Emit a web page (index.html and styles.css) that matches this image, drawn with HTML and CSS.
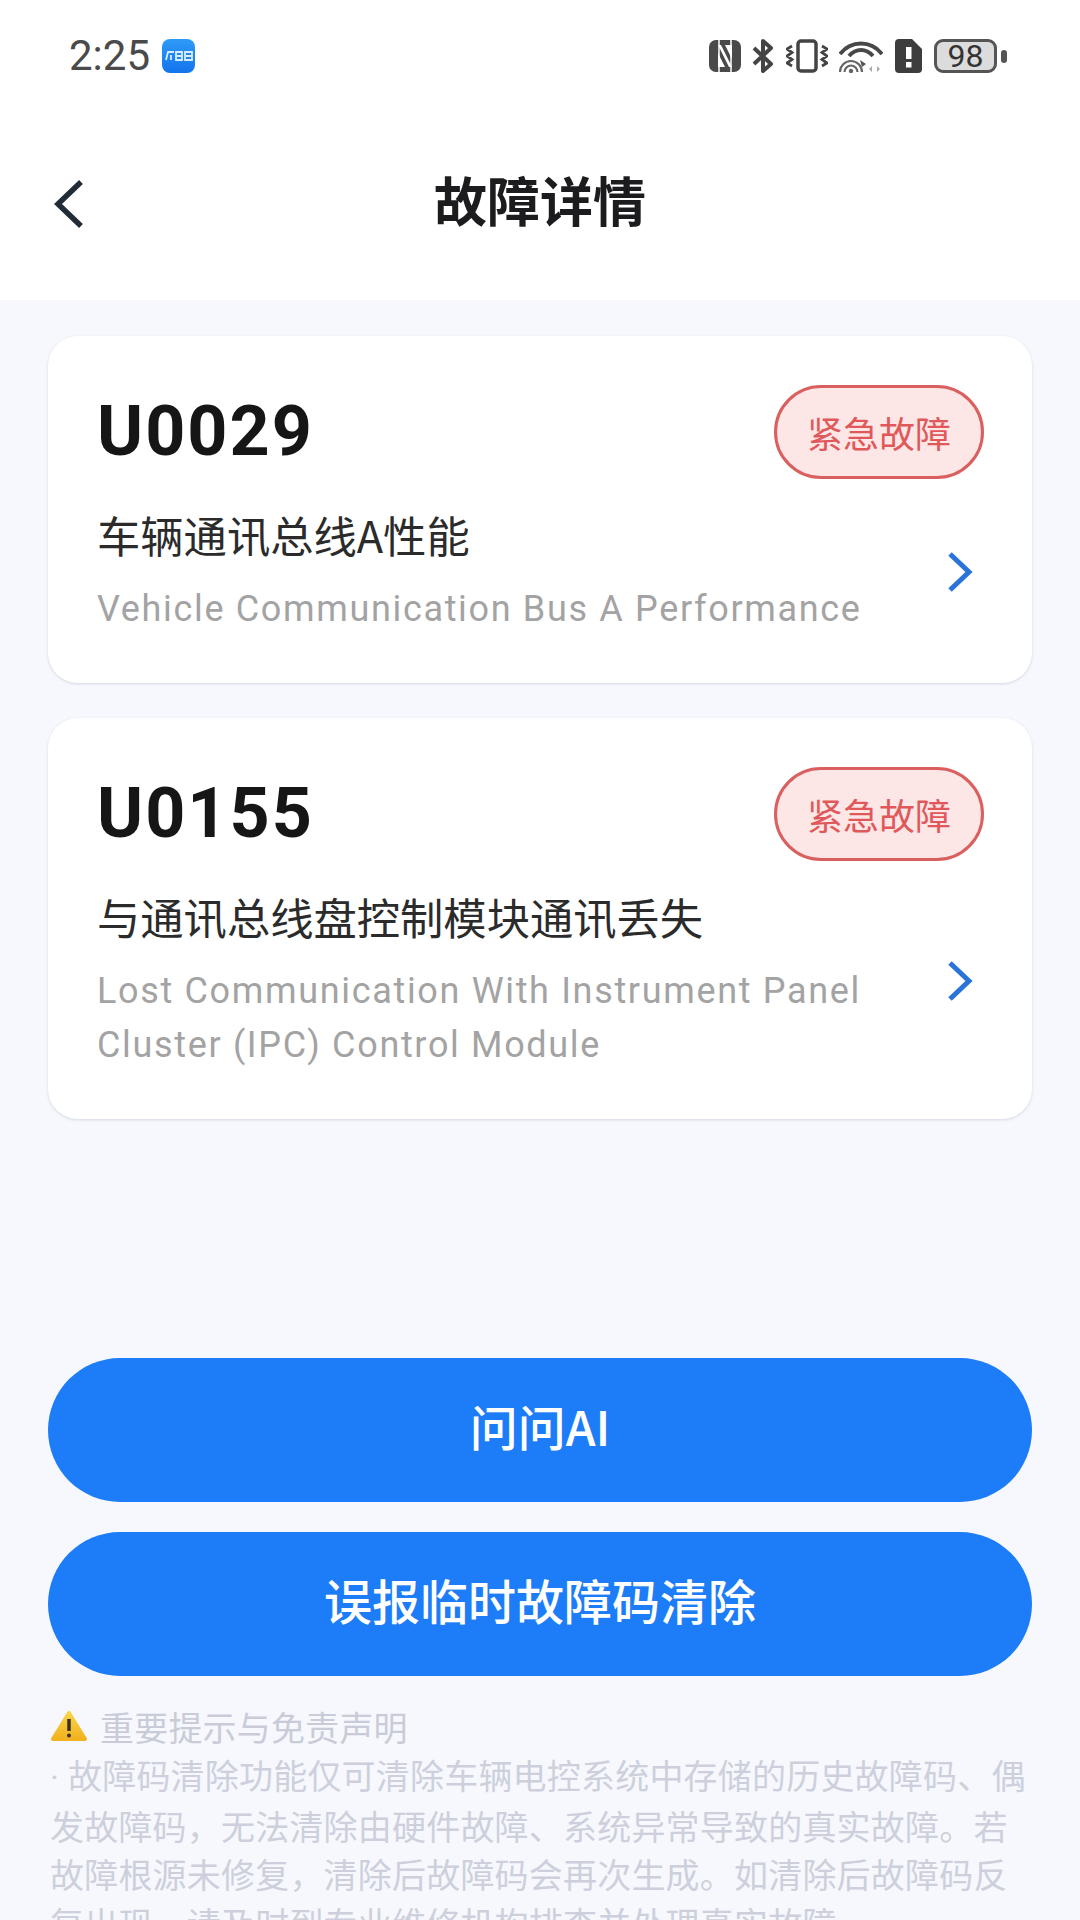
FILE: index.html
```html
<!DOCTYPE html>
<html lang="zh-CN">
<head>
<meta charset="utf-8">
<title>故障详情</title>
<link rel="stylesheet" href="styles.css">
</head>
<body>
<div class="page">
  <header class="top">
    <div class="status">
      <div class="status-left">
        <span class="time">2:25</span>
        <svg class="app-icon" width="33" height="34" viewBox="0 0 33 34"><defs><linearGradient id="appg" x1="0" y1="0" x2="0" y2="1"><stop offset="0" stop-color="#2f9bf7"/><stop offset="1" stop-color="#1273ee"/></linearGradient></defs><rect width="33" height="34" rx="8" fill="url(#appg)"/><path d="M4 21l2-8h6M9 16v5M14 13h6v8h-6zM14 17h6M23 13h7v8h-7zM23 17h7" stroke="#d8ecff" stroke-width="1.800" fill="none"/></svg>
      </div>
      <div class="status-right">
        <svg width="32" height="34" viewBox="0 0 32 34"><rect x="0" y="1" width="32" height="32" rx="7" fill="#4a4a4a"/><path d="M10 1v32M22 1v32" stroke="#fff" stroke-width="1.500"/><path d="M9 6h3l11 22h-3zM9 14l7 14h-7zM23 20l-7-14h7z" fill="#fff"/></svg>
        <svg width="22" height="34" viewBox="0 0 22 34"><path d="M2 9l17 16-8 7V2l8 7L2 25" stroke="#444" stroke-width="4" fill="none" stroke-linejoin="round"/></svg>
        <svg width="42" height="34" viewBox="0 0 42 34"><rect x="12" y="2" width="18" height="30" rx="3" fill="none" stroke="#444" stroke-width="3.500"/><path d="M6 7L1 10l5 3.500L1 17l5 3.500L1 24l5 3M36 7l5 3-5 3.500 5 3.500-5 3.500 5 3.500-5 3" stroke="#444" stroke-width="2.800" fill="none"/></svg>
        <svg width="44" height="34" viewBox="0 0 44 34"><path d="M1 15C12 1 32 1 43 15" stroke="#484848" stroke-width="3.800" fill="none"/><path d="M10 17c7-8 17-8 24 0" stroke="#484848" stroke-width="3.800" fill="none"/><path d="M1 33a11 11 0 0 1 22 0M5.500 33a6.500 6.500 0 0 1 13 0" stroke="#666" stroke-width="2.200" fill="none"/><circle cx="12" cy="32" r="2.200" fill="#666"/><path d="M21 21l6 4-4 3z" fill="#555"/><path d="M30 30l3-3v6zM38 27l3 3-3 3z" fill="#aaa"/></svg>
        <svg width="27" height="34" viewBox="0 0 27 34"><path d="M4 0h13l10 10v20a4 4 0 0 1-4 4H4a4 4 0 0 1-4-4V4a4 4 0 0 1 4-4z" fill="#3d3d3d"/><rect x="11" y="8" width="5.500" height="12" fill="#fff"/><rect x="11" y="23" width="5.500" height="5.500" fill="#fff"/></svg>
        <div class="battery"><span class="battery-body">98</span><span class="battery-cap"></span></div>
      </div>
    </div>
    <div class="nav">
      <svg class="back" width="32" height="52" viewBox="0 0 32 52"><path d="M28 3L5 25l23 22" stroke="#222b38" stroke-width="5.500" fill="none"/></svg>
      <h1 class="title">故障详情</h1>
    </div>
  </header>

  <main class="content">
    <section class="cards">
      <article class="card">
        <div class="card-head">
          <span class="code">U0029</span>
          <span class="badge">紧急故障</span>
        </div>
        <div class="card-body">
          <div class="card-text">
            <p class="name">车辆通讯总线A性能</p>
            <p class="en">Vehicle Communication Bus A Performance</p>
          </div>
          <svg class="chev" width="26" height="40" viewBox="0 0 26 40"><path d="M3 2l19 18L3 38" stroke="#2a73d9" stroke-width="5" fill="none"/></svg>
        </div>
      </article>
      <article class="card">
        <div class="card-head">
          <span class="code">U0155</span>
          <span class="badge">紧急故障</span>
        </div>
        <div class="card-body">
          <div class="card-text">
            <p class="name">与通讯总线盘控制模块通讯丢失</p>
            <p class="en">Lost Communication With Instrument Panel Cluster (IPC) Control Module</p>
          </div>
          <svg class="chev" width="26" height="40" viewBox="0 0 26 40"><path d="M3 2l19 18L3 38" stroke="#2a73d9" stroke-width="5" fill="none"/></svg>
        </div>
      </article>
    </section>

    <section class="actions">
      <button class="primary">问问AI</button>
      <button class="primary">误报临时故障码清除</button>
    </section>

    <section class="notice">
      <p class="notice-title">
        <svg class="warn" width="38" height="32" viewBox="0 0 38 32"><defs><linearGradient id="warng" x1="0" y1="0" x2="0" y2="1"><stop offset="0" stop-color="#f8d448"/><stop offset="1" stop-color="#f2b220"/></linearGradient></defs><path d="M19 3L35 29H3z" fill="url(#warng)" stroke="url(#warng)" stroke-width="4" stroke-linejoin="round"/><path d="M19 9v12" stroke="#3a3020" stroke-width="3.500"/><circle cx="19" cy="25.500" r="2" fill="#3a3020"/></svg>
        重要提示与免责声明
      </p>
      <p class="notice-body"><span class="dot">·</span>故障码清除功能仅可清除车辆电控系统中存储的历史故障码、偶发故障码，无法清除由硬件故障、系统异常导致的真实故障。若故障根源未修复，清除后故障码会再次生成。如清除后故障码反复出现，请及时到专业维修机构排查并处理真实故障。</p>
    </section>
  </main>
</div>
</body>
</html>
```
FILE: styles.css
```css
* { box-sizing: border-box; margin: 0; padding: 0; }
html, body { width: 1080px; height: 1920px; overflow: hidden; }
body { font-family: "Noto Sans CJK SC", "Noto Sans", sans-serif; background: #f6f8fd; }
.page { width: 1080px; height: 1920px; display: flex; flex-direction: column; overflow: hidden; }

.top { background: #fff; height: 300px; flex: none; display: flex; flex-direction: column; }
.status { height: 112px; flex: none; display: flex; align-items: center; justify-content: space-between; padding: 0 73px 0 69px; }
.status-left { display: flex; align-items: center; gap: 12px; }
.time { font: 400 42px/1 Roboto, sans-serif; color: #4a4a4a; }
.app-icon { display: block; }
.status-right { display: flex; align-items: center; gap: 11.5px; }
.status-right svg { display: block; }
.battery { display: flex; align-items: center; gap: 4px; margin-left: 1px; }
.battery-body { width: 63px; height: 34px; border: 3px solid #555; border-radius: 9px; background: #dcdcdc; color: #333; font: 400 32px/28px Roboto, sans-serif; text-align: center; }
.battery-cap { width: 6px; height: 13px; background: #555; border-radius: 3px; }

.nav { position: relative; height: 92px; flex: none; margin-top: 41px; display: flex; align-items: center; justify-content: center; }
.back { position: absolute; left: 53px; top: 26px; }
.title { font-size: 53px; font-weight: 700; color: #1c1c1e; line-height: 1; }

.content { flex: 1; padding: 36px 48px 0; display: flex; flex-direction: column; min-height: 0; }
.cards { height: 1022px; flex: none; display: flex; flex-direction: column; gap: 35px; }
.card { background: #fff; border-radius: 30px; padding: 48px 48px 47px 49px; box-shadow: 0 1px 3px rgba(30, 50, 90, .16); }
.card-head { display: flex; align-items: center; justify-content: space-between; height: 96px; }
.code { font: 700 70px/1 Roboto, sans-serif; letter-spacing: 2px; color: #161616; margin-top: -2px; }
.badge { width: 210px; height: 94px; border-radius: 47px; border: 3px solid #d9605f; background: #fde6e6; color: #e0585a; font-size: 36px; font-weight: 400; display: flex; align-items: center; justify-content: center; }
.card-body { display: flex; align-items: center; justify-content: space-between; margin-top: 26px; }
.card-text { width: 800px; }
.name { font-size: 43.3px; line-height: 56px; color: #2b2b2b; }
.en { font: 400 36px/54px Roboto, sans-serif; letter-spacing: 1.66px; color: #a3a3a3; margin-top: 20px; }
.chev { display: block; flex: none; margin: 2px 11px 0 0; }

.actions { display: flex; flex-direction: column; gap: 30px; }
.primary { height: 144px; border: 0; border-radius: 72px; padding-bottom: 10px; background: #1d7cf7; color: #fff; font: 500 48px/1 "Noto Sans CJK SC", sans-serif; }

.notice { margin-top: 26px; padding-left: 2px; color: #cdd0dc; font-size: 34px; letter-spacing: .2px; }
.notice-title { display: flex; align-items: center; gap: 12px; height: 48px; color: #c9ccd8; }
.warn { display: block; flex: none; }
.notice-body { line-height: 48.5px; margin-top: 1px; }
.dot { display: inline-block; width: 18px; font-family: Roboto, sans-serif; }
```
